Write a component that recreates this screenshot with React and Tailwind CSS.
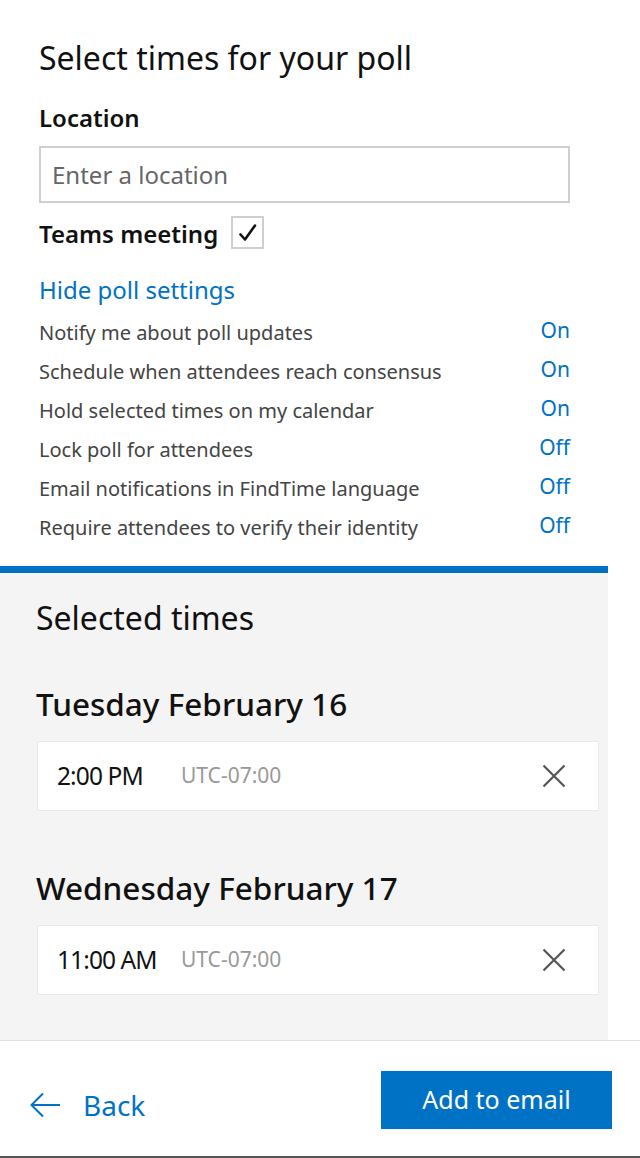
const settings = [
  { label: "Notify me about poll updates", value: "On" },
  { label: "Schedule when attendees reach consensus", value: "On" },
  { label: "Hold selected times on my calendar", value: "On" },
  { label: "Lock poll for attendees", value: "Off" },
  { label: "Email notifications in FindTime language", value: "Off" },
  { label: "Require attendees to verify their identity", value: "Off" },
];

const days = [
  { day: "Tuesday February 16", time: "2:00 PM" },
  { day: "Wednesday February 17", time: "11:00 AM" },
];

const TimeCard = ({ time }) => (
  <div className="flex items-center h-[70px] ml-[1px] w-[562px] bg-white border border-[#e8e8e8]">
    <span className="w-[143px] pl-[19px] text-[24.5px] tracking-[-0.9px] text-[#111]">{time}</span>
    <span className="flex-1 text-[21px] text-[#999]">UTC-07:00</span>
    <svg width="24" height="24" viewBox="0 0 24 24" className="mr-[32px]">
      <path d="M1.5 1.5 L22.5 22.5 M22.5 1.5 L1.5 22.5" stroke="#555" strokeWidth="2.2" />
    </svg>
  </div>
);

export default function App() {
  return (
    <div
      className="w-[640px] h-[1158px] bg-white flex flex-col overflow-hidden"
      style={{ fontFamily: "'Noto Sans', 'Open Sans', sans-serif" }}
    >
      {/* Poll settings */}
      <div className="pl-[39px] w-[570px] pt-[38px] pb-[19px]">
        <h1 className="h-[40px] leading-[40px] text-[32px] text-[#111]">Select times for your poll</h1>
        <div className="mt-[26px] h-[28px] leading-[28px] text-[24px] font-semibold text-[#111]">Location</div>
        <div className="mt-[14px] h-[57px] border-2 border-[#cfcfcf] flex items-center pl-[11px] text-[24px] text-[#666]">
          Enter a location
        </div>
        <div className="mt-[13px] h-[33px] flex items-center gap-[13px]">
          <span className="text-[24px] font-semibold text-[#111] leading-[28px] pt-[3px]">Teams meeting</span>
          <span className="w-[33px] h-[33px] border-2 border-[#cfcfcf] flex items-center justify-center">
            <svg width="20" height="20" viewBox="0 0 20 20" fill="none">
              <path d="M2.5 11.5 L7 16.5 L17 2.5" stroke="#111" strokeWidth="2.6" strokeLinecap="round" strokeLinejoin="round" />
            </svg>
          </span>
        </div>
        <div className="mt-[27px] h-[28px] leading-[28px] text-[24px] text-[#0072c6]">Hide poll settings</div>
        <div className="mt-[9px] flex flex-col">
          {settings.map((s) => (
            <div key={s.label} className="h-[39px] flex items-center justify-between">
              <span className="text-[20px] text-[#444]">{s.label}</span>
              <span className="text-[21px] text-[#0072c6] -mt-[3px]">{s.value}</span>
            </div>
          ))}
        </div>
      </div>

      {/* Selected times */}
      <div className="w-[608px] flex-1 flex flex-col bg-[#f4f4f4] border-t-[7px] border-[#0072c6] pl-[36px]">
        <h2 className="mt-[25px] h-[40px] leading-[40px] text-[32px] text-[#111]">Selected times</h2>
        {days.map((d, i) => (
          <div key={d.day} className={i === 0 ? "mt-[46px]" : "mt-[57px]"}>
            <h3 className="h-[40px] leading-[40px] text-[31.5px] font-medium text-[#111]">{d.day}</h3>
            <div className="mt-[17px]">
              <TimeCard time={d.time} />
            </div>
          </div>
        ))}
      </div>

      {/* Footer */}
      <div className="h-[118px] shrink-0 border-t border-[#e0e0e0] border-b-2 border-b-[#555] flex items-center justify-between pl-[30px] pr-[28px]">
        <div className="flex items-center gap-[22px] text-[#0072c6] mt-[12px]">
          <svg width="31" height="26" viewBox="0 0 31 26" fill="none">
            <path d="M30 13 H2 M13 1.5 L1.5 13 L13 24.5" stroke="#0072c6" strokeWidth="2" />
          </svg>
          <span className="text-[28px]">Back</span>
        </div>
        <button className="w-[231px] h-[58px] bg-[#0072c6] text-white text-[25px] mt-[3px]">Add to email</button>
      </div>
    </div>
  );
}
